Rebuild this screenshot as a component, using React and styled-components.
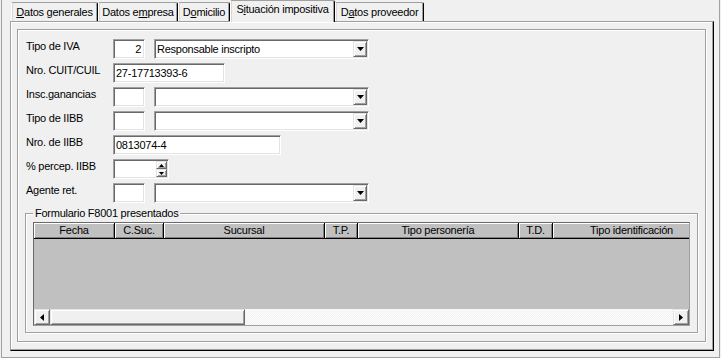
import React from "react";
import styled, { createGlobalStyle, css } from "styled-components";

const GlobalStyle = createGlobalStyle`
  html, body { margin: 0; padding: 0; background: #f0f0f0; }
  body {
    font-family: "Liberation Sans", Arial, sans-serif;
    font-size: 11px;
    letter-spacing: -0.25px;
    color: #000;
  }
  * { box-sizing: border-box; }
`;

const sunken = css`
  background: #fff;
  border-style: solid;
  border-width: 1px;
  border-color: #a0a0a0 #fff #fff #a0a0a0;
  box-shadow: inset 1px 1px 0 #696969, inset -1px -1px 0 #e3e3e3;
`;

const raised = css`
  background: #f0f0f0;
  border-style: solid;
  border-width: 1px;
  border-color: #e3e3e3 #696969 #696969 #e3e3e3;
  box-shadow: inset 1px 1px 0 #fff, inset -1px -1px 0 #a0a0a0;
`;

const Window = styled.div`
  width: 721px;
  height: 358px;
  padding-left: 1px;
  overflow: hidden;
  background: #f0f0f0;
`;

const Frame = styled.div`
  width: 719px;
  height: 358px;
  border-left: 1px solid #a0a0a0;
  border-right: 1px solid #a0a0a0;
  border-bottom: 1px solid #a0a0a0;
  padding: 0 5px 6px 8px;
  display: flex;
  flex-direction: column;
`;

const TabStrip = styled.div`
  height: 21px;
  flex-shrink: 0;
  display: flex;
  align-items: flex-end;
  padding-left: 1px;
  position: relative;
  z-index: 1;
`;

const Tab = styled.div`
  width: ${(p) => p.$w}px;
  height: ${(p) => (p.$active ? 22 : 19)}px;
  margin-bottom: ${(p) => (p.$active ? -1 : 0)}px;
  background: #f0f0f0;
  border-top: 1px solid #a0a0a0;
  border-left: 1px solid #fff;
  border-right: 1px solid #000;
  box-shadow: inset -1px 0 0 #a0a0a0, inset 1px 0 0 #d8d8d8;
  border-radius: 2px 2px 0 0;
  padding-top: ${(p) => (p.$active ? 2 : 3)}px;
  line-height: 13px;
  text-align: center;
  white-space: nowrap;
`;

const TabPage = styled.div`
  flex: 1;
  min-width: 0;
  min-height: 0;
  display: flex;
  border-top: 1px solid #a0a0a0;
  border-left: 1px solid #a0a0a0;
  border-right: 1px solid #000;
  border-bottom: 1px solid #000;
  box-shadow: inset -1px -1px 0 #a0a0a0, inset 1px 1px 0 #fff;
  padding: 7px 7px 8px 6px;
`;

const Panel = styled.div`
  flex: 1;
  min-width: 0;
  display: flex;
  flex-direction: column;
  border: 1px solid #a0a0a0;
  box-shadow: 1px 1px 0 #fff, inset 1px 1px 0 #fff;
  padding: 9px 7px 8px 7px;
`;

const Rows = styled.div`
  padding-left: 1px;
  display: flex;
  flex-direction: column;
`;

const Row = styled.div`
  height: 24px;
  display: flex;
  align-items: flex-start;
  gap: 9px;
`;

const Label = styled.div`
  width: 78px;
  padding-top: 1px;
  line-height: 13px;
  white-space: nowrap;
`;

const TextBox = styled.div`
  ${sunken};
  width: ${(p) => p.$w}px;
  height: 20px;
  padding: 0 3px 0 2px;
  line-height: 18px;
  text-align: ${(p) => p.$align || "left"};
  white-space: nowrap;
  overflow: hidden;
`;

const Combo = styled.div`
  ${sunken};
  width: 215px;
  height: 20px;
  padding: 1px;
  display: flex;
`;

const ComboText = styled.div`
  flex: 1;
  padding-left: 1px;
  line-height: 16px;
  white-space: nowrap;
`;

const DropButton = styled.div`
  ${raised};
  width: 14px;
  height: 16px;
  display: flex;
  align-items: center;
  justify-content: center;
`;

const SpinBox = styled.div`
  ${sunken};
  width: 56px;
  height: 20px;
  padding: 1px;
  display: flex;
`;

const SpinText = styled.div`
  flex: 1;
`;

const SpinButtons = styled.div`
  width: 11px;
  display: flex;
  flex-direction: column;
`;

const SpinButton = styled.div`
  ${raised};
  height: 8px;
  display: flex;
  align-items: center;
  justify-content: center;
`;

const Group = styled.fieldset`
  margin: 0;
  min-width: 0;
  border: 1px solid #a0a0a0;
  box-shadow: 1px 1px 0 #fff, inset 1px 1px 0 #fff;
  padding: 2px 7px 6px 7px;
`;

const Legend = styled.legend`
  padding: 0 2px;
  line-height: 13px;
  background: #f0f0f0;
`;

const Grid = styled.div`
  height: 104px;
  min-width: 0;
  border: 1px solid;
  border-color: #696969 #a0a0a0 #a0a0a0 #696969;
  background: #c0c0c0;
  display: flex;
  flex-direction: column;
  overflow: hidden;
`;

const HeaderRow = styled.div`
  height: 16px;
  flex-shrink: 0;
  display: flex;
  border-bottom: 1px solid #000;
  overflow: hidden;
`;

const HeaderCell = styled.div`
  flex: 0 0 ${(p) => p.$w}px;
  height: 15px;
  border-right: 1px solid #000;
  box-shadow: inset 1px 1px 0 #fff, inset -1px -1px 0 #808080;
  background: #c0c0c0;
  padding-top: 1px;
  line-height: 13px;
  text-align: center;
  white-space: nowrap;
`;

const GridBody = styled.div`
  flex: 1;
  background: #c0c0c0;
`;

const ScrollBar = styled.div`
  height: 16px;
  flex-shrink: 0;
  display: flex;
`;

const ScrollButton = styled.div`
  ${raised};
  width: 16px;
  height: 16px;
  flex-shrink: 0;
  display: flex;
  align-items: center;
  justify-content: center;
`;

const Thumb = styled.div`
  ${raised};
  width: ${(p) => p.$w}px;
  flex-shrink: 0;
  height: 16px;
`;

const Track = styled.div`
  flex: 1;
  min-width: 0;
  background-color: #fff;
  background-image: repeating-conic-gradient(#f0f0f0 0 25%, #fff 0 50%);
  background-size: 2px 2px;
`;

const Arrow = ({ dir, w = 7, h = 4 }) => {
  const pts = {
    down: `0,0 ${w},0 ${w / 2},${h}`,
    up: `0,${h} ${w},${h} ${w / 2},0`,
    left: `${h},0 ${h},${w} 0,${w / 2}`,
    right: `0,0 0,${w} ${h},${w / 2}`,
  }[dir];
  const horiz = dir === "left" || dir === "right";
  return (
    <svg width={horiz ? h : w} height={horiz ? w : h} style={{ display: "block" }}>
      <polygon points={pts} fill="#000" />
    </svg>
  );
};

const ComboBox = ({ text }) => (
  <Combo>
    <ComboText>{text}</ComboText>
    <DropButton>
      <Arrow dir="down" />
    </DropButton>
  </Combo>
);

const tabs = [
  { w: 87, label: <><u>D</u>atos generales</> },
  { w: 80, label: <>Datos e<u>m</u>presa</> },
  { w: 52, label: <>D<u>o</u>micilio</> },
  { w: 105, label: <>S<u>i</u>tuación impositiva</>, active: true },
  { w: 89, label: <>D<u>a</u>tos proveedor</> },
];

const columns = [
  { w: 81, t: "Fecha" },
  { w: 49, t: "C.Suc." },
  { w: 161, t: "Sucursal" },
  { w: 33, t: "T.P." },
  { w: 161, t: "Tipo personería" },
  { w: 34, t: "T.D." },
  { w: 158, t: "Tipo identificación" },
];

export default function App() {
  return (
    <>
      <GlobalStyle />
      <Window>
        <Frame>
          <TabStrip>
            {tabs.map((t, i) => (
              <Tab key={i} $w={t.w} $active={t.active}>
                {t.label}
              </Tab>
            ))}
          </TabStrip>
          <TabPage>
            <Panel>
              <Rows>
                <Row>
                  <Label>Tipo de IVA</Label>
                  <TextBox $w={32} $align="right">2</TextBox>
                  <ComboBox text="Responsable inscripto" />
                </Row>
                <Row>
                  <Label>Nro. CUIT/CUIL</Label>
                  <TextBox $w={112}>27-17713393-6</TextBox>
                </Row>
                <Row>
                  <Label>Insc.ganancias</Label>
                  <TextBox $w={32} />
                  <ComboBox text="" />
                </Row>
                <Row>
                  <Label>Tipo de IIBB</Label>
                  <TextBox $w={32} />
                  <ComboBox text="" />
                </Row>
                <Row>
                  <Label>Nro. de IIBB</Label>
                  <TextBox $w={168}>0813074-4</TextBox>
                </Row>
                <Row>
                  <Label>% percep. IIBB</Label>
                  <SpinBox>
                    <SpinText />
                    <SpinButtons>
                      <SpinButton>
                        <Arrow dir="up" w={5} h={3} />
                      </SpinButton>
                      <SpinButton>
                        <Arrow dir="down" w={5} h={3} />
                      </SpinButton>
                    </SpinButtons>
                  </SpinBox>
                </Row>
                <Row>
                  <Label>Agente ret.</Label>
                  <TextBox $w={32} />
                  <ComboBox text="" />
                </Row>
              </Rows>
              <Group>
                <Legend>Formulario F8001 presentados</Legend>
                <Grid>
                  <HeaderRow>
                    {columns.map((c) => (
                      <HeaderCell key={c.t} $w={c.w}>
                        {c.t}
                      </HeaderCell>
                    ))}
                  </HeaderRow>
                  <GridBody />
                  <ScrollBar>
                    <ScrollButton>
                      <Arrow dir="left" w={7} h={4} />
                    </ScrollButton>
                    <Thumb $w={195} />
                    <Track />
                    <ScrollButton>
                      <Arrow dir="right" w={7} h={4} />
                    </ScrollButton>
                  </ScrollBar>
                </Grid>
              </Group>
            </Panel>
          </TabPage>
        </Frame>
      </Window>
    </>
  );
}
